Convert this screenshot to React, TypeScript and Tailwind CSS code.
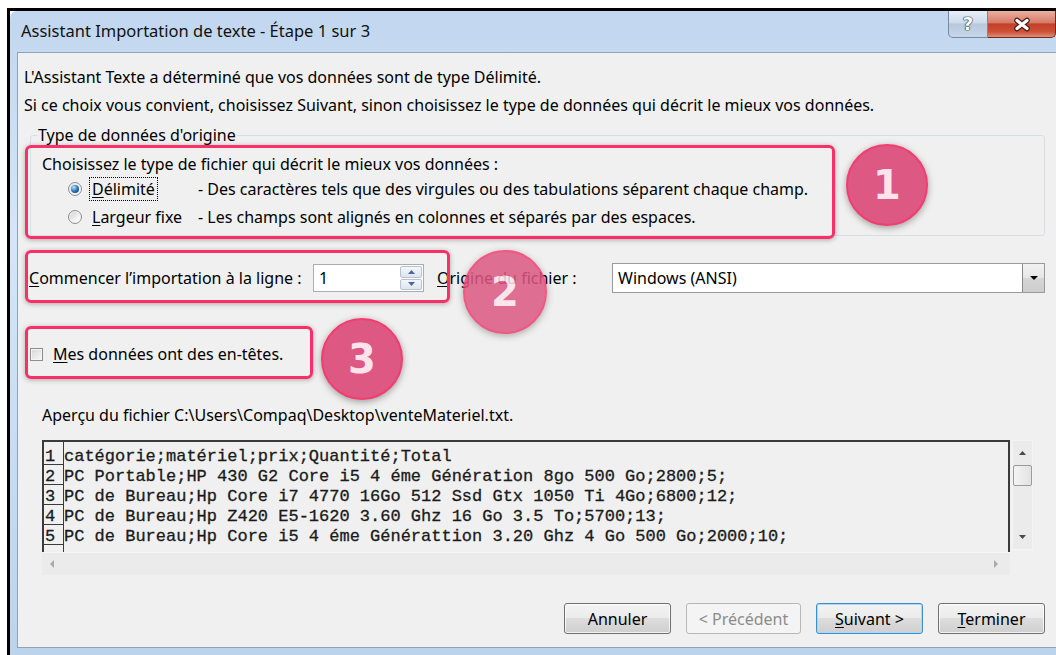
import { JSX } from "react";

const previewLines = [
  "catégorie;matériel;prix;Quantité;Total",
  "PC Portable;HP 430 G2 Core i5 4 éme Génération 8go 500 Go;2800;5;",
  "PC de Bureau;Hp Core i7 4770 16Go 512 Ssd Gtx 1050 Ti 4Go;6800;12;",
  "PC de Bureau;Hp Z420 E5-1620 3.60 Ghz 16 Go 3.5 To;5700;13;",
  "PC de Bureau;Hp Core i5 4 éme Générattion 3.20 Ghz 4 Go 500 Go;2000;10;",
];

// small triangle used by the spin box, combo and scroll bars
const Arrow = ({ dir, color, w = 8, h = 4 }: { dir: "up" | "down" | "left" | "right"; color: string; w?: number; h?: number }) => {
  const pts: Record<string, string> = {
    up: `0,${h} ${w},${h} ${w / 2},0`,
    down: `0,0 ${w},0 ${w / 2},${h}`,
    left: `${w},0 ${w},${h} 0,${h / 2}`,
    right: `0,0 0,${h} ${w},${h / 2}`,
  };
  return (
    <svg width={w} height={h} viewBox={`0 0 ${w} ${h}`}>
      <polygon points={pts[dir]} fill={color} />
    </svg>
  );
};

const Radio = ({ checked }: { checked?: boolean }) => (
  <span className="flex h-[14px] w-[14px] shrink-0 items-center justify-center rounded-full border border-[#8e8f8f] bg-[linear-gradient(135deg,#cfcfcf,#f7f7f7_70%,#ffffff)] shadow-[inset_0_0_0_1px_#f2f2f2]">
    {checked && (
      <span className="h-[8px] w-[8px] rounded-full bg-[radial-gradient(circle_at_35%_30%,#c6e6fc_0%,#4a98d8_35%,#134a86_75%,#0b2f5a_100%)]" />
    )}
  </span>
);

const Mnemonic = ({ text }: { text: string }) => (
  <>
    <u className="underline-offset-[2px]">{text[0]}</u>
    {text.slice(1)}
  </>
);

const WinButton = ({ children, variant = "normal", width }: { children: JSX.Element | string; variant?: "normal" | "disabled" | "default"; width: string }) => {
  const look = {
    normal: "border-[#707070] bg-[linear-gradient(180deg,#f3f3f3,#ebebeb_50%,#dddddd_50%,#cfcfcf)] text-black shadow-[inset_0_0_0_1px_rgba(255,255,255,0.75)]",
    disabled: "border-[#b5b8ba] bg-[#f4f4f4] text-[#8c8c8c]",
    default: "border-[#3c8fcf] bg-[linear-gradient(180deg,#f3f3f3,#ebebeb_50%,#dddddd_50%,#cfcfcf)] text-black shadow-[inset_0_0_0_1px_#a9dbf6]",
  }[variant];
  return <div className={`flex h-[31px] items-center justify-center rounded-[3px] border ${width} ${look}`}>{children}</div>;
};

const Callout = ({ n, className }: { n: string; className: string }) => (
  <div
    className={`absolute flex items-center justify-center rounded-full border-2 border-[#f53c6f] bg-[#dd5883] shadow-[0_2px_7px_rgba(0,0,0,0.35)] ${className}`}
  >
    <span className="font-['DejaVu_Sans',sans-serif] text-[40px] font-bold leading-none text-[#fde4ec]">{n}</span>
  </div>
);

export default function App() {
  return (
    <div className="relative h-[655px] w-[1056px] overflow-hidden bg-white pl-[7px] pt-[8px] font-['Noto_Sans',sans-serif] text-[16px] text-black">
      <div className="h-full border-l-[3px] border-t-[3px] border-black">
        <div className="flex h-full flex-col rounded-tl-[7px] bg-[linear-gradient(180deg,#c1d7ef,#d4e5f7_35%,#c7dcf2_70%,#bcd3ec)]">
          {/* caption bar */}
          <div className="flex h-[41px] shrink-0 items-start justify-between">
            <div className="flex h-full items-center pl-[11px] text-[16.5px] text-[#111]">Assistant Importation de texte - Étape 1 sur 3</div>
            <div className="flex">
              <div className="flex h-[27px] w-[40px] items-center justify-center rounded-bl-[5px] border border-t-0 border-[#7489a3] bg-[linear-gradient(180deg,#e6eef7,#cfdceb_45%,#b7c9dc_50%,#c6d6e8)]">
                <span className="font-['DejaVu_Sans',sans-serif] text-[18px] font-bold leading-none text-white [text-shadow:0_0_1px_#2f3d4e,0_0_1px_#2f3d4e,0_0_1px_#2f3d4e,0_0_1px_#2f3d4e]">?</span>
              </div>
              <div className="flex h-[27px] w-[68px] items-center justify-center rounded-br-[5px] border-b border-r border-[#6b2b22] bg-[linear-gradient(180deg,#eab0a2,#d67b67_45%,#c23f27_50%,#cc5238_80%,#df8d78)]">
                <svg width="20" height="15" viewBox="0 0 20 15">
                  <path d="M5 3.5 L15 11.5 M15 3.5 L5 11.5" stroke="#4a1a12" strokeWidth="5.5" strokeLinecap="round" />
                  <path d="M5 3.5 L15 11.5 M15 3.5 L5 11.5" stroke="#ffffff" strokeWidth="3.2" strokeLinecap="round" />
                </svg>
              </div>
            </div>
          </div>

          {/* client area */}
          <div className="flex flex-1 flex-col pb-[7px] pl-[7px]">
            <div className="flex flex-1 flex-col border-b border-l border-t border-[#8fa3b8] bg-[#f0f0f0] pr-[11px]">
              <div className="mt-[14px] pl-[6px] leading-[20px]">
                L'Assistant Texte a déterminé que vos données sont de type Délimité.
              </div>
              <div className="mt-[8px] pl-[6px] leading-[20px]">
                Si ce choix vous convient, choisissez Suivant, sinon choisissez le type de données qui décrit le mieux vos données.
              </div>

              {/* Type de données d'origine */}
              <div className="ml-[12px] mt-[20px] rounded-[3px] border border-[#d5dfe5] pb-[8px]">
                <div className="-mt-[11px] ml-[6px] w-fit bg-[#f0f0f0] px-[1px] leading-[20px]">Type de données d'origine</div>
                <div className="mt-[9px] pl-[11px] leading-[20px]">Choisissez le type de fichier qui décrit le mieux vos données :</div>
                <div className="mt-[5px] flex h-[20px] items-center pl-[37px]">
                  <Radio checked />
                  <div className="ml-[7px] w-[109px]">
                    <span className="border border-dotted border-black px-[2px] leading-[18px]">
                      <Mnemonic text="Délimité" />
                    </span>
                  </div>
                  <span>- Des caractères tels que des virgules ou des tabulations séparent chaque champ.</span>
                </div>
                <div className="mt-[8px] flex h-[20px] items-center pl-[37px]">
                  <Radio />
                  <div className="ml-[7px] w-[109px] pl-[3px]">
                    <Mnemonic text="Largeur fixe" />
                  </div>
                  <span>- Les champs sont alignés en colonnes et séparés par des espaces.</span>
                </div>
              </div>

              {/* start row + file origin */}
              <div className="mt-[27px] flex h-[30px] items-center pl-[11px]">
                <div className="w-[284px]">
                  <Mnemonic text="Commencer l’importation à la ligne :" />
                </div>
                <div className="flex h-[28px] w-[111px] border border-[#abadb3] bg-white">
                  <div className="flex flex-1 items-center pl-[5px]">1</div>
                  <div className="my-[1px] mr-[1px] flex w-[22px] flex-col gap-[1px]">
                    <div className="flex flex-1 items-center justify-center rounded-[2px] border border-[#b9c3d1] bg-[linear-gradient(180deg,#f4f7fb,#dde5ef)]">
                      <Arrow dir="up" color="#4b6a96" w={7} h={4} />
                    </div>
                    <div className="flex flex-1 items-center justify-center rounded-[2px] border border-[#b9c3d1] bg-[linear-gradient(180deg,#f4f7fb,#dde5ef)]">
                      <Arrow dir="down" color="#4b6a96" w={7} h={4} />
                    </div>
                  </div>
                </div>
                <div className="ml-[13px] w-[175px]">
                  <Mnemonic text="Origine du fichier :" />
                </div>
                <div className="flex h-[30px] flex-1 border border-[#9a9a9a] bg-white">
                  <div className="flex flex-1 items-center pl-[5px]">Windows (ANSI)</div>
                  <div className="flex w-[22px] items-center justify-center border-l border-[#8a8a8a] bg-[linear-gradient(180deg,#f2f2f2,#e6e6e6_50%,#d6d6d6_50%,#cdcdcd)]">
                    <Arrow dir="down" color="#000" w={8} h={4} />
                  </div>
                </div>
              </div>

              {/* headers checkbox */}
              <div className="mt-[51px] flex h-[20px] items-center pl-[12px]">
                <span className="h-[13px] w-[13px] border border-[#8e8f8f] bg-[linear-gradient(135deg,#d6d6d6,#f8f8f8)] shadow-[inset_0_0_0_1px_#f4f4f4]" />
                <span className="ml-[10px]">
                  <Mnemonic text="Mes données ont des en-têtes." />
                </span>
              </div>

              <div className="mt-[41px] pl-[24px] leading-[20px]">Aperçu du fichier C:\Users\Compaq\Desktop\venteMateriel.txt.</div>

              {/* file preview */}
              <div className="ml-[24px] mt-[15px] grid grid-cols-[968px_21px] grid-rows-[112px_23px] gap-x-[2px]">
                <div className="flex overflow-hidden border-x-2 border-t-2 border-[#3b3b3b] font-['Liberation_Mono',monospace] text-[17px] text-[#1b1b1b] [-webkit-text-stroke:0.3px_#1b1b1b]">
                  <div className="w-[20px] shrink-0 border-r border-[#3b3b3b] pt-[3px]">
                    {previewLines.map((_, i) => (
                      <div key={i} className="h-[20px] border-b border-[#3b3b3b] pl-[1px] leading-[23px]">
                        {i + 1}
                      </div>
                    ))}
                  </div>
                  <div className="flex-1 pt-[3px]">
                    {previewLines.map((line, i) => (
                      <div key={i} className="h-[20px] whitespace-pre leading-[23px]">
                        {line}
                      </div>
                    ))}
                  </div>
                </div>
                <div className="flex h-[110px] flex-col items-center bg-[#ebebeb] shadow-[inset_0_0_0_1px_#f4f4f4]">
                  <div className="mt-[11px]">
                    <Arrow dir="up" color="#4a4a4a" w={7} h={4} />
                  </div>
                  <div className="mt-[10px] h-[21px] w-[19px] rounded-[2px] border border-[#9a9a9a] bg-[linear-gradient(90deg,#f4f4f4,#e2e2e2)]" />
                  <div className="flex-1" />
                  <div className="mb-[11px]">
                    <Arrow dir="down" color="#4a4a4a" w={7} h={4} />
                  </div>
                </div>
                <div className="flex items-center justify-between bg-[#ebebeb] px-[8px] shadow-[inset_0_1px_0_#f6f6f6]">
                  <Arrow dir="left" color="#a9a9a9" w={4} h={8} />
                  <span className="mr-[4px]">
                    <Arrow dir="right" color="#a9a9a9" w={4} h={8} />
                  </span>
                </div>
              </div>

              {/* wizard buttons */}
              <div className="mt-[28px] flex justify-end gap-[15px]">
                <WinButton width="w-[107px]">Annuler</WinButton>
                <WinButton width="w-[115px]" variant="disabled">
                  {"< Précédent"}
                </WinButton>
                <WinButton width="w-[107px]" variant="default">
                  <span>
                    <Mnemonic text="Suivant >" />
                  </span>
                </WinButton>
                <WinButton width="w-[107px]">
                  <span>
                    <Mnemonic text="Terminer" />
                  </span>
                </WinButton>
              </div>
            </div>
          </div>
        </div>
      </div>

      {/* numbered annotations */}
      <div className="absolute left-[25px] top-[145px] h-[94px] w-[810px] rounded-[6px] border-[3px] border-[#fb2f68] shadow-[0_1px_5px_rgba(0,0,0,0.3)]" />
      <div className="absolute left-[25px] top-[250px] h-[53px] w-[425px] rounded-[6px] border-[3px] border-[#fb2f68] shadow-[0_1px_5px_rgba(0,0,0,0.3)]" />
      <div className="absolute left-[25px] top-[326px] h-[53px] w-[288px] rounded-[6px] border-[3px] border-[#fb2f68] shadow-[0_1px_5px_rgba(0,0,0,0.3)]" />
      <Callout n="1" className="left-[846px] top-[144px] h-[82px] w-[82px]" />
      <Callout n="2" className="left-[463px] top-[250px] h-[84px] w-[84px] opacity-[0.85]" />
      <Callout n="3" className="left-[321px] top-[318px] h-[82px] w-[82px]" />
    </div>
  );
}
